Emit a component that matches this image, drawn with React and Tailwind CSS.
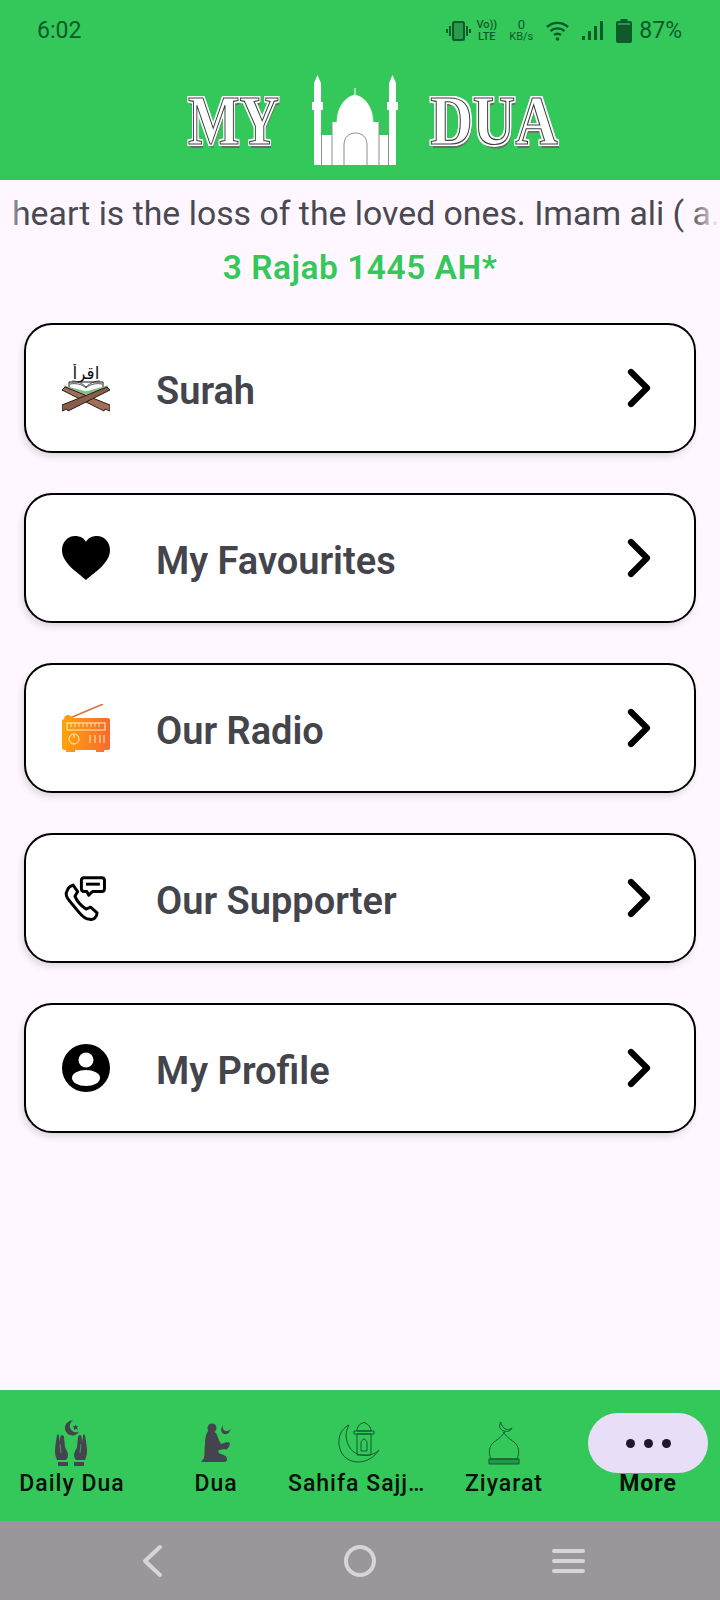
import { ChevronRight } from 'lucide-react';

function Vibrate() {
  return (
    <svg width="25" height="20" viewBox="0 0 25 20" fill="none" stroke="#0d5a2a">
      <rect x="7" y="1" width="11" height="18" rx="1.5" strokeWidth="2" fill="#2a9a4c" />
      <path d="M4 5v10M1 8v4M21 5v10M24 8v4" strokeWidth="2" />
    </svg>
  );
}

function Wifi() {
  return (
    <svg width="23" height="20" viewBox="0 0 23 20" fill="none" stroke="#0d5a2a" strokeWidth="2.4">
      <path d="M1 6c6-5.500 15-5.500 21 0M4.500 10c4-3.500 10-3.500 14 0M8 14c2-1.500 5-1.500 7 0" />
      <circle cx="11.500" cy="18" r="1.800" fill="#0d5a2a" stroke="none" />
    </svg>
  );
}

function Signal() {
  return (
    <svg width="22" height="20" viewBox="0 0 22 20" fill="#0d5a2a">
      <rect x="0" y="15" width="3" height="4" />
      <rect x="6" y="10" width="3" height="9" />
      <rect x="12" y="5" width="3" height="14" />
      <rect x="18" y="0" width="3" height="19" />
    </svg>
  );
}

function Battery() {
  return (
    <svg width="16" height="24" viewBox="0 0 16 24" fill="#0d5a2a">
      <rect x="4.500" y="0" width="7" height="3" />
      <rect x="0" y="2" width="16" height="22" rx="2" />
      <rect x="2" y="4" width="12" height="2" fill="#2a9a4c" />
    </svg>
  );
}

function StatusBar() {
  return (
    <div className="flex h-[60px] items-center pl-[37px] pr-[38px] pt-[2px] text-[#0d5a2a]">
      <span className="text-[23px]">6:02</span>
      <div className="ml-auto flex items-center">
        <Vibrate />
        <div className="ml-[6px] flex w-[19px] flex-col items-center text-[11px] font-medium leading-[12px]">
          <span>Vo))</span>
          <span>LTE</span>
        </div>
        <div className="ml-[13px] flex w-[24px] flex-col items-center text-[11px] leading-[12px]">
          <span className="text-[13px]">0</span>
          <span>KB/s</span>
        </div>
        <div className="ml-[13px]"><Wifi /></div>
        <div className="ml-[13px]"><Signal /></div>
        <div className="ml-[12px]"><Battery /></div>
        <span className="ml-[7px] text-[23px]">87%</span>
      </div>
    </div>
  );
}

function MosqueLogo() {
  return (
    <svg width="86" height="90" viewBox="0 0 86 90" fill="white">
      <path d="M2 27V8L5.500 0 9 8v19h2v8H9v55H2V35H0v-8z" />
      <path d="M77 27V8L80.500 0 84 8v19h2v8h-2v55h-7V35h-2v-8z" />
      <path d="M43 13v7c-11 2-18 14-18 27h36c0-13-7-25-18-27z" stroke="white" strokeWidth="0.600" />
      <rect x="20" y="47" width="47" height="43" />
      <rect x="9" y="60" width="11" height="30" />
      <rect x="67" y="60" width="10" height="30" />
      <path d="M32 90V70c0-8 5-12 11.500-12S55 62 55 70v20M9.500 60v30M20 47v43M67 47v43M76.500 60v30" fill="none" stroke="#8a8f8c" strokeWidth="1" />
    </svg>
  );
}

function LogoWord({ children, className }) {
  return (
    <span className={`${className} flex justify-center font-['Liberation_Serif',serif] text-[70px] font-bold leading-none whitespace-nowrap text-white [-webkit-text-stroke:1.2px_#3f4044] [text-shadow:2px_0_0_white,-2px_0_0_white,0_2px_0_white,0_-2px_0_white,2px_2px_0_white,-2px_2px_0_white,2px_-2px_0_white,-2px_-2px_0_white,2px_4px_0_#6b6b6b]`}>
      {children}
    </span>
  );
}

function AppHeader() {
  return (
    <header className="h-[180px] shrink-0 bg-[#34c85a]">
      <StatusBar />
      <div className="flex items-start pl-[186px] pt-[15px]">
        <LogoWord className="mt-[11px] w-[95px] scale-x-[0.78]">MY</LogoWord>
        <div className="ml-[31px]"><MosqueLogo /></div>
        <LogoWord className="ml-[30px] mt-[11px] w-[132px] scale-x-[0.84]">DUA</LogoWord>
      </div>
    </header>
  );
}

function QuranIcon() {
  return (
    <svg width="48" height="48" viewBox="0 0 48 48">
      <text x="24" y="15" textAnchor="middle" fontSize="17" fontFamily="DejaVu Sans" fill="#111">اقرأ</text>
      <path d="M7 18h34v8l-17 6-17-6z" fill="white" stroke="#111" strokeWidth="1" />
      <path d="M2 23l22 6 22-6" fill="none" stroke="#7fbf8a" strokeWidth="3" />
      <path d="M8 20c6-1 12 0 16 4 4-4 10-5 16-4M10 17c5 0 10 2 14 6 4-4 9-6 14-6" fill="none" stroke="#222" strokeWidth="0.800" />
      <path d="M0 26l3-3 45 18v6l-5-2-1 2z" fill="#9f6f5a" stroke="#2a1a14" strokeWidth="1" />
      <path d="M48 26l-3-3L0 41v6l5-2 1 2z" fill="#8a5d4a" stroke="#2a1a14" strokeWidth="1" />
    </svg>
  );
}

function HeartIcon() {
  return (
    <svg width="48" height="48" viewBox="0 0 48 48" className="blur-[0.6px]">
      <path d="M24 46C15 38 0 29 0 16 0 8 6 2 13 2c5 0 9 2 11 6 2-4 6-6 11-6 7 0 13 6 13 14 0 13-15 22-24 30z" fill="black" />
    </svg>
  );
}

function RadioIcon() {
  return (
    <svg width="48" height="48" viewBox="0 0 48 48">
      <defs>
        <linearGradient id="radioFill" x1="0" x2="1" y1="0" y2="0">
          <stop offset="0" stopColor="#ffa30c" />
          <stop offset="1" stopColor="#f66a2f" />
        </linearGradient>
      </defs>
      <path d="M8 14L41 0" stroke="#d9703a" strokeWidth="1.500" />
      <path d="M2 15c0-2 1-4 4-4 2 0 3 1 4 3h36c1 0 2 1 2 2v28c0 1-1 2-2 2h-4v3h-8v-3H13v3H4v-3H2c-1 0-2-1-2-2V16z" fill="url(#radioFill)" />
      <rect x="5" y="19" width="38" height="7" fill="none" stroke="#fff3c4" strokeWidth="1" />
      <path d="M9 19v4M13 19v4M17 19v4M21 19v4M25 19v4M29 19v4M33 19v4M37 19v4" stroke="#fff3c4" strokeWidth="0.800" />
      <circle cx="12" cy="35" r="5" fill="none" stroke="#fff3c4" strokeWidth="1" />
      <path d="M12 30v4M28 31v8M33 31v8M38 31v8M42 31v8" stroke="#fff3c4" strokeWidth="1" />
    </svg>
  );
}

function SupportIcon() {
  return (
    <svg width="48" height="48" viewBox="-2 -3 52 52" fill="none" stroke="black" strokeWidth="3.200" strokeLinejoin="round">
      <path d="M22 1h19c2 0 3 1 3 3v9c0 2-1 3-3 3H31l-4 4-2-4h-3c-2 0-3-1-3-3V4c0-2 1-3 3-3z" />
      <path d="M24 8h15" />
      <path d="M10 9l5 7-3 5c2 5 6 10 12 14l5-2 7 6c0 5-4 8-8 7-4 0-8-3-12-8L6 26C3 22 1 19 4 14c1-3 3-4 6-5z" />
    </svg>
  );
}

function ProfileIcon() {
  return (
    <svg width="48" height="48" viewBox="0 0 48 48" className="blur-[0.6px]">
      <circle cx="24" cy="24" r="24" fill="black" />
      <circle cx="24" cy="16" r="7.500" fill="white" />
      <ellipse cx="24" cy="34" rx="14" ry="8" fill="white" />
    </svg>
  );
}

function MenuCard({ icon, label }) {
  return (
    <button
      type="button"
      className="flex h-[130px] w-full items-center rounded-[28px] border-2 border-black bg-white pl-[36px] pr-[23px] text-left shadow-[-2px_4px_6px_rgba(0,0,0,0.12)]"
    >
      <span className="w-[48px] shrink-0">{icon}</span>
      <span className="ml-[46px] pt-[6px] text-[38px] font-semibold text-[#44444c]">{label}</span>
      <ChevronRight className="ml-auto" size={64} strokeWidth={2.300} color="black" />
    </button>
  );
}

function HandsIcon() {
  const hand = 'M9 16c1-1 2 0 2 1l1 7c0-3 0-8 2-8 1 0 2 1 2 2l1 10c1 3 3 5 3 8 0 2-1 4-2 5H9c-1-3-2-5-2-9 0-4 1-10 2-16z';
  return (
    <svg width="48" height="48" viewBox="0 0 48 48" fill="#45434e">
      <path d="M25 1.500a7.500 7.500 0 1 0 6 11 6 6 0 1 1-6-11z" />
      <path d="M27 5l1 2 2 0-1 2 1 2-2-1-2 1 0-2-1-2 2 0z" />
      <path d={hand} />
      <path d="M10 43h10v4H10z" />
      <g transform="matrix(-1 0 0 1 46 0)">
        <path d={hand} />
        <path d="M10 43h10v4H10z" />
      </g>
      <path d="M12 25l1 9M33 25l-1 9" stroke="#34c85a" strokeWidth="0.700" fill="none" />
    </svg>
  );
}

function PrayerIcon() {
  return (
    <svg width="48" height="48" viewBox="0 0 48 48" fill="#45434e">
      <circle cx="20" cy="9" r="4.500" />
      <path d="M17 12c5-1 8 2 9 7l3 6 6-2 1 3-3 4-6 1c-1 2-1 3 2 4 3 1 6 2 6 5 0 3-2 3-5 3H9l3-4c1-4 0-8 1-14 0-6 1-11 4-14z" />
      <path d="M32 28l4-5 2 1-1 4-3 3z" />
      <path d="M31 6c-1 4 1 6 4 6 2 0 3-1 4-3-1 5-4 7-7 6-3-1-4-5-1-9z" />
    </svg>
  );
}

function SahifaIcon() {
  return (
    <svg width="48" height="48" viewBox="0 0 48 48" fill="none" stroke="#14592f" strokeWidth="1">
      <path d="M13 6C2 11 0 26 7 36c8 10 26 10 36-5-8 8-23 7-29-2-5-8-5-16-1-23z" />
      <path d="M27 4c-4 1-6 4-6 8h14c0-4-3-7-6-8l-1-1z" />
      <path d="M18 12h20v3H18zM21 15h14v21H21z" />
      <path d="M25 32v-8c0-2 2-4 3-4s3 2 3 4v8z" />
    </svg>
  );
}

function ZiyaratIcon() {
  return (
    <svg width="48" height="48" viewBox="0 0 48 48" fill="none" stroke="#14592f" strokeWidth="1">
      <path d="M21 3c-3 4-1 8 3 9 3 1 7 0 8-3-3 2-6 2-8 0-2-2-3-4-3-6z" />
      <path d="M24 13c-1 4-6 7-10 10-5 4-6 11-3 17h26c3-6 2-13-3-17-4-3-9-6-10-10z" />
      <rect x="9" y="40" width="30" height="5" fill="#14592f" fillOpacity="0.450" />
    </svg>
  );
}

function BottomNav() {
  const items = [
    { label: 'Daily Dua', icon: <HandsIcon /> },
    { label: 'Dua', icon: <PrayerIcon /> },
    { label: 'Sahifa Sajjadiya', icon: <SahifaIcon />, labelClass: 'mr-[6px]' },
    { label: 'Ziyarat', icon: <ZiyaratIcon /> },
  ];

  return (
    <nav className="grid h-[131px] shrink-0 grid-cols-5 bg-[#34c85a] pt-[23px] text-[23px] font-medium tracking-[1px] text-[#0a0f0c]">
      {items.map((item) => (
        <div key={item.label} className="flex flex-col items-center">
          <div className="flex h-[60px] items-center">{item.icon}</div>
          <span className={`${item.labelClass ?? ''} -mt-[2px] w-[138px] truncate text-center leading-[26px]`}>{item.label}</span>
        </div>
      ))}
      <div className="flex flex-col items-center">
        <div className="flex h-[60px] w-[120px] items-center justify-center gap-[9px] rounded-full bg-[#e8def8]">
          <span className="h-[9px] w-[9px] rounded-full bg-[#1d192b]" />
          <span className="h-[9px] w-[9px] rounded-full bg-[#1d192b]" />
          <span className="h-[9px] w-[9px] rounded-full bg-[#1d192b]" />
        </div>
        <span className="-mt-[2px] font-bold leading-[26px]">More</span>
      </div>
    </nav>
  );
}

function SystemNav() {
  return (
    <div className="grid h-[79px] shrink-0 grid-cols-3 items-center bg-[#9b969b] px-[48px]">
      <svg width="24" height="34" viewBox="0 0 24 34" fill="none" stroke="#d6d6d6" strokeWidth="4" strokeLinecap="round" strokeLinejoin="round" className="justify-self-center">
        <path d="M20 3L5 17l15 14" />
      </svg>
      <span className="h-[32px] w-[32px] justify-self-center rounded-full border-4 border-[#d6d6d6]" />
      <div className="flex w-[33px] flex-col gap-[6px] justify-self-center">
        <span className="h-[4px] rounded-full bg-[#d6d6d6]" />
        <span className="h-[4px] rounded-full bg-[#d6d6d6]" />
        <span className="h-[4px] rounded-full bg-[#d6d6d6]" />
      </div>
    </div>
  );
}

export default function App() {
  const menu = [
    { label: 'Surah', icon: <QuranIcon /> },
    { label: 'My Favourites', icon: <HeartIcon /> },
    { label: 'Our Radio', icon: <RadioIcon /> },
    { label: 'Our Supporter', icon: <SupportIcon /> },
    { label: 'My Profile', icon: <ProfileIcon /> },
  ];

  return (
    <div className="flex h-[1600px] w-[720px] flex-col overflow-hidden bg-[#fef7ff] font-['Roboto',sans-serif]">
      <AppHeader />

      <main className="flex-1">
        <div className="relative overflow-hidden pl-[12px] pt-[14px] text-[33.800px] leading-[40px] whitespace-nowrap text-[#4a4850]">
          heart is the loss of the loved ones. Imam ali ( a.s )
          <div className="absolute inset-y-0 left-0 w-[24px] bg-gradient-to-r from-[#fef7ff] to-transparent" />
          <div className="absolute inset-y-0 right-0 w-[30px] bg-gradient-to-l from-[#fef7ff] to-transparent" />
        </div>
        <p className="mt-[14px] text-center text-[33.500px] leading-[40px] font-semibold tracking-[0.5px] text-[#34c85a]">3 Rajab 1445 AH*</p>

        <div className="mt-[35px] flex flex-col gap-[40px] pl-[24px] pr-[24px]">
          {menu.map((item) => (
            <MenuCard key={item.label} icon={item.icon} label={item.label} />
          ))}
        </div>
      </main>

      <BottomNav />
      <SystemNav />
    </div>
  );
}
